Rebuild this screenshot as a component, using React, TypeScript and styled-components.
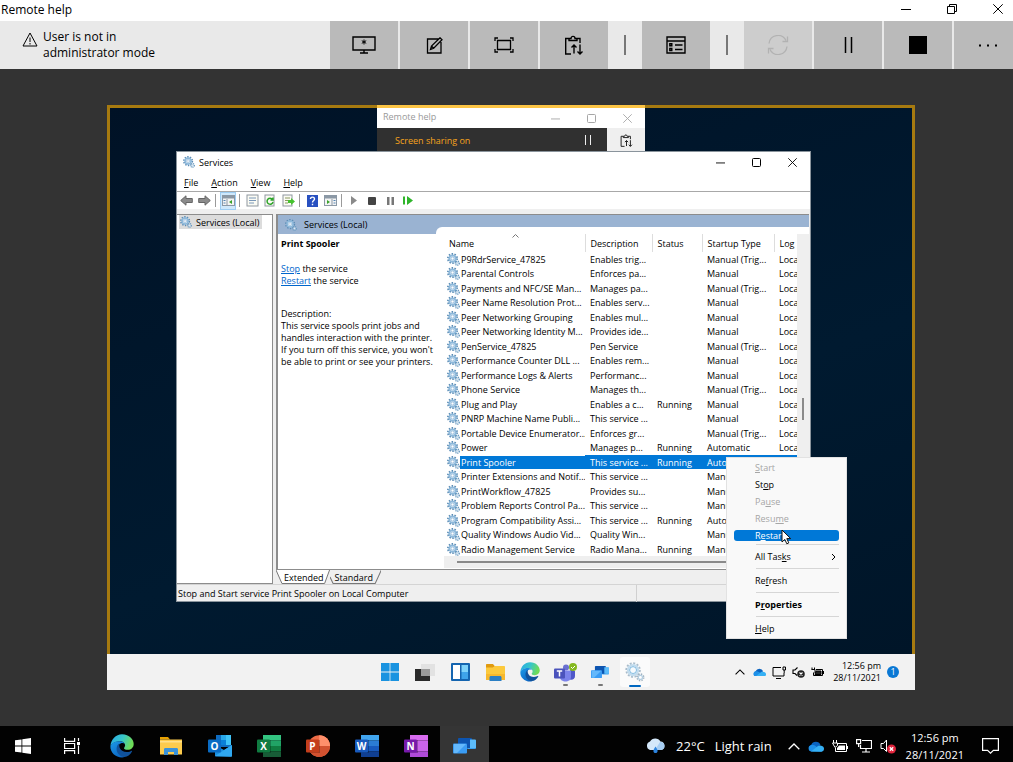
import React from "react";
import styled, { createGlobalStyle, css } from "styled-components";

const GlobalStyle = createGlobalStyle`
  *, *::before, *::after { box-sizing: border-box; }
  body { margin: 0; background: #333; font-family: "Open Sans", "Noto Sans", sans-serif; color: #000; }
  button { font: inherit; color: inherit; border: 0; padding: 0; margin: 0; background: none; }
  h1, h2, p { margin: 0; font-weight: 400; }
  svg { display: block; flex: none; }
`;

/* ---------- outer window ---------- */

const Page = styled.div`
  display: flex;
  flex-direction: column;
  min-height: 100vh;
`;

const TitleBar = styled.header`
  display: flex;
  justify-content: space-between;
  height: 21px;
  background: #fff;
`;

const Title = styled.h1`
  padding-left: 1px;
  font-size: 12px;
  line-height: 19px;
`;

const CaptionButtons = styled.div<{ $size: number; $color?: string }>`
  display: flex;
  color: ${(p) => p.$color ?? "#000"};
  button {
    display: flex;
    align-items: center;
    justify-content: center;
    width: ${(p) => p.$size}px;
  }
`;

const OuterCaptions = styled(CaptionButtons)`
  height: 17px;
  margin-right: -8px;
`;

const SessionBar = styled.div`
  display: flex;
  height: 48px;
  background: #e9e9e9;
`;

const Notice = styled.div`
  display: flex;
  flex: 1;
  gap: 5px;
  padding: 8px 0 0 22px;
  font-size: 12px;
  line-height: 16px;
  svg { margin-top: 2px; }
`;

const ToolGroup = styled.div`
  display: flex;
  gap: 2px;
`;

const ToolButton = styled.button<{ $last?: boolean }>`
  display: flex;
  align-items: center;
  justify-content: center;
  width: ${(p) => (p.$last ? 59 : 68)}px;
  padding-left: ${(p) => (p.$last ? 9 : 0)}px;
  background: #bababa;
  &:disabled { background: #cdcdcd; color: #b2b2b2; }
`;

const Divider = styled.div`
  display: flex;
  align-items: center;
  justify-content: center;
  width: 34px;
  &::before { content: ""; width: 2px; height: 20px; background: #777; }
`;

const Viewer = styled.main`
  display: flex;
  flex: 1;
  padding: 36px 98px 36px 107px;
  background: #333;
`;

/* ---------- shared remote screen ---------- */

const RemoteScreen = styled.div`
  display: flex;
  flex: 1;
  flex-direction: column;
`;

const Desktop = styled.div`
  position: relative;
  flex: 1;
  min-height: 549px;
  background: linear-gradient(160deg, #001226, #001a30 60%, #001528);
  &::after {
    content: "";
    position: absolute;
    inset: 0;
    border: 3px solid #a67a10;
    border-bottom: 0;
    pointer-events: none;
  }
`;

const Floating = styled.section<{ $x: number; $y: number; $w: number }>`
  position: absolute;
  left: ${(p) => p.$x}px;
  top: ${(p) => p.$y}px;
  width: ${(p) => p.$w}px;
`;

const HelpWindow = styled(Floating)`
  z-index: 1;
  border-top: 3px solid #fcc444;
  background: #fff;
`;

const HelpTitle = styled.div`
  display: flex;
  justify-content: space-between;
  height: 20px;
  padding-left: 6px;
  font-size: 9px;
  line-height: 18px;
  color: #999;
`;

const HelpStatus = styled.div`
  display: flex;
  height: 24px;
  background: #303030;
  color: #f7a41d;
  font-size: 9px;
  line-height: 25px;
`;

const HelpLabel = styled.span`
  flex: 1;
  padding-left: 18px;
`;

const HelpAction = styled.button<{ $light?: boolean }>`
  display: flex;
  align-items: center;
  justify-content: center;
  width: 38px;
  background: ${(p) => (p.$light ? "#efefef" : "#303030")};
  color: ${(p) => (p.$light ? "#111" : "#eee")};
`;

const ServicesWindow = styled(Floating)`
  z-index: 2;
  display: flex;
  flex-direction: column;
  border: 1px solid #8a949c;
  background: #efefef;
  font-size: 9px;
`;

const WindowTitle = styled.div`
  display: flex;
  align-items: center;
  gap: 4px;
  height: 20px;
  padding-left: 6px;
  background: #fff;
  h2 { flex: 1; font-size: 9px; }
`;

const MenuBar = styled.nav`
  display: flex;
  gap: 13px;
  height: 20px;
  padding: 1px 0 0 7px;
  background: #fff;
  border-bottom: 1px solid #a8a8a8;
`;

const IconBar = styled.div`
  display: flex;
  align-items: center;
  gap: 4px;
  height: 17px;
  padding-left: 2px;
  background: #fff;
`;

const IconButton = styled.button<{ $on?: boolean }>`
  display: flex;
  align-items: center;
  justify-content: center;
  width: 14px;
  height: 16px;
  ${(p) => p.$on && css`background: #cfe8fb; outline: 1px solid #9dcdf3;`}
`;

const BarSplit = styled.span`
  width: 1px;
  height: 13px;
  margin: 0 1px 0 0;
  background: #9a9a9a;
`;

const Console = styled.div`
  display: flex;
  gap: 3px;
  height: 370px;
  margin-top: 5px;
`;

const Tree = styled.div`
  width: 96px;
  border: 1px solid #8c8c8c;
  border-left: 0;
  background: #fff;
`;

const TreeItem = styled.button`
  display: flex;
  align-items: center;
  gap: 4px;
  height: 14px;
  margin: 0 0 0 2px;
  padding: 0 3px 0 1px;
  background: #dcdcdc;
`;

const Work = styled.div`
  display: flex;
  flex: 1;
  flex-direction: column;
  min-width: 0;
  margin-right: 1px;
`;

const Sheet = styled.div`
  flex: 1;
  border: 1px solid #8c8c8c;
  border-left-width: 2px;
  border-right: 0;
  background: #fff;
`;

const Banner = styled.div`
  display: flex;
  align-items: center;
  gap: 7px;
  height: 19px;
  padding-left: 7px;
  background: #9ab3d2;
`;

const Split = styled.div`
  display: flex;
`;

const Details = styled.div`
  width: 158px;
  padding: 4px 0 0 3px;
  line-height: 12px;
  white-space: nowrap;
  h2 { font-size: 9px; font-weight: 700; line-height: 12px; margin-bottom: 13px; }
  a { color: #0066cc; text-decoration: underline; }
  p + p { margin-top: 21px; }
`;

const ListArea = styled.div`
  display: flex;
  flex: 1;
  min-width: 0;
  height: 341px;
  margin-top: -7px;
  padding: 7px 0 0 8px;
  border-top-left-radius: 6px;
  background: #fff;
`;

const ListColumn = styled.div`
  flex: 1;
  min-width: 0;
`;

const Table = styled.table`
  width: 100%;
  table-layout: fixed;
  border-collapse: collapse;
  th, td { padding: 0 0 0 5px; text-align: left; font-weight: 400; white-space: nowrap; overflow: hidden; line-height: 13px; }
  th { height: 18px; border-right: 1px solid #ddd; position: relative; }
  th:last-child { border-right: 0; }
  th svg { position: absolute; top: 0; left: 68px; color: #777; }
  tbody tr { height: 14px; }
  tbody tr:nth-child(even) { height: 15px; }
  tbody td:first-child { padding-left: 3px; }
`;

const Row = styled.tr<{ $selected?: boolean }>`
  ${(p) => p.$selected && css`
    td:not(:first-child), td span { background: #0078d7; color: #fff; }
  `}
`;

const NameCell = styled.div`
  display: flex;
  align-items: center;
  span { flex: 1; padding-left: 1px; }
`;

const HorizontalScroll = styled.div`
  display: flex;
  align-items: center;
  height: 12px;
  padding-left: 13px;
  background: #efefef;
  &::before { content: ""; flex: 1; height: 2px; background: #8a8a8a; }
`;

const VerticalScroll = styled.div`
  width: 12px;
  padding: 164px 0 0 5px;
  background: #efefef;
  &::before { content: ""; display: block; width: 2px; height: 22px; background: #8a8a8a; }
`;

const SheetTabs = styled.div`
  display: flex;
  height: 14px;
  background: #efefef;
`;

const SheetTab = styled.button<{ $active?: boolean }>`
  position: relative;
  z-index: 0;
  height: 14px;
  padding: 0 ${(p) => (p.$active ? 6 : 8)}px 0 ${(p) => (p.$active ? 8 : 5)}px;
  line-height: 13px;
  svg { position: absolute; inset: 0; width: 100%; height: 100%; z-index: -1; }
`;

const StatusLine = styled.div`
  display: grid;
  grid-template-columns: 460px 1fr;
  height: 17px;
  border-top: 1px solid #d4d4d4;
  line-height: 17px;
  span { padding-left: 1px; border-right: 1px solid #d0d0d0; }
`;

const ContextMenu = styled(Floating)`
  z-index: 3;
  padding: 1px 7px;
  border: 1px solid #e2e2e2;
  background: #f9f9f9;
  font-size: 9px;
`;

const MenuItem = styled.button<{ $hot?: boolean; $strong?: boolean }>`
  display: flex;
  align-items: center;
  justify-content: space-between;
  width: 100%;
  height: 17px;
  padding: 0 3px 0 21px;
  font-weight: ${(p) => (p.$strong ? 700 : 400)};
  &:disabled { color: #a6a6a6; }
  ${(p) => p.$hot && css`
    height: 11px;
    margin: 3px 0;
    border-radius: 3px;
    background: #0078d7;
    color: #fff;
  `}
`;

const MenuRule = styled.hr`
  height: 1px;
  margin: 3px 0 3px 22px;
  border: 0;
  background: #d6d6d6;
`;

const Pointer = styled.div`
  position: absolute;
  z-index: 4;
  left: 674px;
  top: 424px;
`;

const InnerTaskbar = styled.div`
  display: flex;
  height: 36px;
  padding-left: 268px;
  background: #f2f2f2;
`;

const InnerApps = styled.div`
  display: flex;
  flex: 1;
  gap: 5px;
`;

const InnerApp = styled.button<{ $mark?: string }>`
  position: relative;
  display: flex;
  align-items: center;
  justify-content: center;
  width: 30px;
  height: 30px;
  margin-top: 3px;
  border-radius: 3px;
  background: ${(p) => (p.$mark === "active" ? "#fbfbfb" : "none")};
  ${(p) => p.$mark && css`
    &::after {
      content: "";
      position: absolute;
      bottom: ${p.$mark === "active" ? 0 : 1}px;
      width: ${p.$mark === "active" ? 12 : 5}px;
      height: 2px;
      border-radius: 1px;
      background: ${p.$mark === "active" ? "#0067c0" : "#777"};
    }
  `}
`;

const InnerTray = styled.div`
  display: flex;
  align-items: center;
  gap: 6px;
  padding-right: 16px;
`;

const InnerStatus = styled.div`
  display: flex;
  align-items: center;
  gap: 6px;
  margin-right: 3px;
  svg:first-child { margin-right: 2px; }
`;

const Clock = styled.time<{ $big?: boolean }>`
  font-size: ${(p) => (p.$big ? 11 : 9)}px;
  line-height: ${(p) => (p.$big ? 17 : 12)}px;
  text-align: ${(p) => (p.$big ? "center" : "right")};
  margin: 0 ${(p) => (p.$big ? 2 : 0)}px;
  white-space: nowrap;
`;

const Badge = styled.span`
  width: 12px;
  height: 12px;
  border-radius: 6px;
  background: #0a78d4;
  color: #fff;
  font-size: 9px;
  line-height: 12px;
  text-align: center;
`;

/* ---------- outer taskbar ---------- */

const Taskbar = styled.footer`
  display: flex;
  height: 36px;
  background: #020202;
  color: #fff;
  overflow: hidden;
`;

const TaskApps = styled.div`
  display: flex;
  flex: 1;
`;

const TaskApp = styled.button<{ $active?: boolean }>`
  display: flex;
  align-items: center;
  justify-content: center;
  width: 49px;
  height: 40px;
  background: ${(p) => (p.$active ? "#353535" : "none")};
  &:first-child { width: 48px; padding-right: 2px; }
  &:nth-child(2) { padding-right: 2px; }
`;

const Tray = styled.div`
  display: flex;
  align-items: center;
  gap: 8px;
  height: 40px;
  padding-right: 14px;
  font-size: 13px;
`;

const Weather = styled.button`
  display: flex;
  align-items: center;
  gap: 10px;
  margin-right: 8px;
`;

/* ---------- drawings ---------- */

type SvgProps = { w: number; h?: number; box: string; children: React.ReactNode; sw?: number; fill?: string };
const Draw = ({ w, h, box, children, sw = 1, fill = "none" }: SvgProps) => (
  <svg width={w} height={h ?? w} viewBox={box} fill={fill} stroke={fill === "none" ? "currentColor" : "none"} strokeWidth={sw} aria-hidden="true">
    {children}
  </svg>
);

const Minimise = ({ w = 10 }) => <Draw w={w} box="0 0 10 10"><path d="M0 5.5h10" /></Draw>;
const Restore = () => <Draw w={10} box="0 0 10 10"><path d="M.5 2.500h7v7h-7zM2.500 2.500v-2h7v7h-2" /></Draw>;
const Maximise = () => <Draw w={9} box="0 0 9 9"><rect x=".5" y=".5" width="8" height="8" rx="1" /></Draw>;
const Close = ({ w = 10 }) => <Draw w={w} box="0 0 10 10"><path d="M.3.3l9.400 9.400M9.700.3L.3 9.700" /></Draw>;

const Gears = ({ size = 13 }) => (
  <Draw w={size} box="0 0 26 26" fill="#fff">
    <circle cx="11" cy="11" r="9" fill="none" stroke="#5b8cb5" strokeWidth="4" strokeDasharray="2.900 2.750" />
    <circle cx="11" cy="11" r="6.500" fill="#e4f1fa" stroke="#8db8da" strokeWidth="3.500" />
    <circle cx="11" cy="11" r="3" fill="#fff" stroke="#5f93c2" />
    <circle cx="20.500" cy="20.500" r="4" fill="none" stroke="#6a9ac0" strokeWidth="3" strokeDasharray="2 1.600" />
    <circle cx="20.500" cy="20.500" r="2.500" fill="#dceaf5" stroke="#8fb4d2" />
  </Draw>
);

const PaleGears = () => (
  <Draw w={20} box="0 0 26 26" fill="#fff">
    <circle cx="10.500" cy="10.500" r="8.800" fill="none" stroke="#a9bccb" strokeWidth="2.500" strokeDasharray="2.600 2" />
    <circle cx="10.500" cy="10.500" r="6.500" fill="#fff" stroke="#c2dcee" strokeWidth="3" />
    <circle cx="10.500" cy="10.500" r="4.500" fill="#f6fafd" stroke="#5ba7d8" />
    <circle cx="20" cy="20" r="4.300" fill="none" stroke="#9fb2c0" strokeWidth="2" strokeDasharray="1.800 1.600" />
    <circle cx="20" cy="20" r="2.700" fill="#fff" stroke="#b5cfe2" strokeWidth="1.600" />
  </Draw>
);

const Clipboard = ({ size = 20 }) => (
  <Draw w={size} box="0 0 20 20" sw={1.4}>
    <path d="M7 19H1.700V3.500H5M13 3.500h3V8M5 5.500v-2h2c0-2.800 4-2.800 4 0h2v2zM10 18.500v-8M7.500 12.500L10 10l2.500 2.500M16 9.500V19M13.500 16.500L16 19l2.500-2.500" />
  </Draw>
);

const Edge = ({ size }: { size: number }) => (
  <Draw w={size} box="0 0 24 24" fill="#fff">
    <defs>
      <linearGradient id="edgeTop" x1="0" y1="0" x2="1" y2=".3">
        <stop offset="0" stopColor="#28a8e8" /><stop offset=".55" stopColor="#38c6c8" /><stop offset="1" stopColor="#6fdc58" />
      </linearGradient>
      <linearGradient id="edgeSide" x1="0" y1="0" x2=".6" y2="1">
        <stop offset="0" stopColor="#1c9ae8" /><stop offset="1" stopColor="#0c67c4" />
      </linearGradient>
    </defs>
    <path fill="url(#edgeTop)" d="M.5 12C.8 5.500 5.800.3 12 .3c7.500 0 11.700 5.200 11.700 9.700 0 3.500-2.600 5.800-6 5.800-2.700 0-3.700-.8-3.700-1.600 0-.7 1.100-1.200 1.100-2.900C15.100 9 13 7.200 10 7.200 5.500 7.200 1.300 9.500.5 12z" />
    <path fill="url(#edgeSide)" d="M.4 12.300C1 9 5.500 7 10 7.200c2.300.1 4 1 4.700 2.300C13 8.500 10.500 8.800 9 10.500c-2.500 3-1.500 9.500 6 12.300-1 .5-2 .7-3 .7C5.500 23.500.1 18.500.4 12.300z" />
    <path fill="#10529c" d="M6.600 15c0-2.600 1-4.500 2.900-5.700-1 3.200.6 8.700 7.200 8.700 2.300 0 3.800-.7 4.600-1.100.5-.3 1 .1.700.6-1.700 3.200-4.800 5.500-7.500 5.400C9.800 22.700 6.600 19 6.600 15z" />
  </Draw>
);

const Folder = ({ w }: { w: number }) => (
  <Draw w={w} h={(w * 18) / 22} box="0 0 22 18" fill="#fff">
    <path fill="#e8a100" d="M0 0h8l2 2.500H0z" />
    <path fill="#fccb4d" d="M0 2.500h22V17.500H0z" />
    <path fill="#ffe08a" d="M0 4h22v1.500H0z" />
    <path fill="#3a92d8" d="M4 18v-5.500c0-1 .6-1.500 1.500-1.500h11c.9 0 1.500.5 1.500 1.500V18h-4v-3H8v3z" />
  </Draw>
);

const FolderFlat = () => (
  <Draw w={19} h={17} box="0 0 19 17" fill="#fff">
    <path fill="#e09a10" d="M0 1c0-.6.4-1 1-1h6l2 2.500L7 4H0z" />
    <path fill="#fcc93c" d="M0 3.500h7l2-1.500h9c.6 0 1 .4 1 1v13H0z" />
    <path fill="#f7b82c" d="M0 10h19v6H0z" />
    <path fill="#2b7fc4" d="M3.500 17v-3.500c0-1 .6-1.500 1.500-1.500h9c.9 0 1.500.5 1.500 1.500V17z" />
  </Draw>
);

const Cloud = ({ w = 15 }) => (
  <Draw w={w} h={(w * 11) / 16} box="0 0 16 11" fill="#fff">
    <path fill="#0a63c0" d="M3.500 10.500a3.400 3.400 0 0 1-.3-6.500 5 5 0 0 1 9.300 0z" />
    <path fill="#1e90e8" d="M3.200 4c2-.5 3.500.5 5 1.500l6 5H3.500A3.300 3.300 0 0 1 3.200 4z" />
    <path fill="#35b0f4" d="M3 10.600l7-5.600c1-1 5.800-.8 6 2.500.1 2-1.300 3.200-3 3.200z" />
  </Draw>
);

const RemoteApp = ({ w }: { w: number }) => (
  <Draw w={w} h={(w * 16) / 23} box="0 0 23 16" fill="#fff">
    <rect x="14" y="2" width="9" height="9" rx="1" fill="#3aa0f0" />
    <rect x="5" y="0" width="14" height="10" rx="1" fill="#0c54b0" />
    <path d="M17 1.500h5a1 1 0 0 1 1 1V10h-6z" fill="#5cbcfa" />
    <rect x="0" y="5.500" width="14" height="10" rx="1" fill="#3a9cf4" />
    <path d="M1 6l12 0-9 9H1z" fill="#64b8fb" />
  </Draw>
);

type OfficeProps = { letter: string; dark: string; bands: string[]; round?: boolean };
const Office = ({ letter, dark, bands, round }: OfficeProps) => (
  <svg width="24" height="22" viewBox="0 0 24 22" aria-hidden="true">
    {round ? (
      <>
        <circle cx="13.200" cy="11" r="10.800" fill={bands[0]} />
        <path d="M13.200.2A10.800 10.800 0 0 1 24 11H13.200z" fill={bands[1]} />
        <path d="M2.400 11H24a10.800 10.800 0 0 1-21.600 0z" fill={bands[2]} />
      </>
    ) : (
      bands.map((c, i) => <rect key={i} x="6" y={i * 5.5} width="18" height="5.500" fill={c} />)
    )}
    <rect x="5" y="5" width="9" height="13" fill="#000" opacity=".25" />
    <rect x="0" y="4.500" width="13" height="13" rx="1" fill={dark} />
    <text x="6.500" y="14.600" textAnchor="middle" fontFamily="Open Sans, sans-serif" fontWeight="700" fontSize="10" fill="#fff">{letter}</text>
  </svg>
);

const Chevron = ({ w = 12 }) => <Draw w={w} h={w / 2 + 1} box="0 0 12 7" sw={1.3}><path d="M.7 6.300L6 1l5.300 5.300" /></Draw>;

const ConsolePane = ({ flip = false }) => (
  <Draw w={13} h={11} box="0 0 13 11" fill="#fff">
    <rect x=".5" y=".5" width="12" height="10" fill="#f4f4f4" stroke="#8b98a5" />
    <path d="M1 1h11v2.500H1z" fill="#8b98a5" />
    <path d={flip ? "M8 4v6" : "M5 4v6"} stroke="#8b98a5" />
    <path d={flip ? "M3 5l3 2-3 2z" : "M10 5L7 7l3 2z"} fill="#3aa32b" />
    <path d={flip ? "M9.500 5.500h2M9.500 8h2" : "M1.500 5.500h2M1.500 8h2"} stroke="#5585b5" />
  </Draw>
);

const Sheetlet = ({ kind }: { kind: "list" | "refresh" | "export" }) => (
  <Draw w={13} h={13} box="0 0 13 13" fill="#fff">
    <rect x="1" y="1" width={kind === "list" ? 11 : 9} height="11" fill="#fbfbf4" stroke="#8f98a0" />
    {kind === "list" && <path d="M3 4h7M3 6.500h7M3 9h5" stroke="#7b98b8" />}
    {kind === "refresh" && <path d="M8.500 5.500A3 3 0 1 0 9 8M9 3.500v2.500H6.500" fill="none" stroke="#2fa52b" strokeWidth="1.500" />}
    {kind === "export" && <><path d="M3 4h5M3 6.500h3M3 9h3" stroke="#8a9a60" /><path d="M6 6h3V4l4 3.500L9 11V9H6z" fill="#46c22f" /></>}
  </Draw>
);

const Arrow = ({ back = false }) => (
  <Draw w={13} h={11} box="0 0 13 11" fill="#fff">
    <path d={back ? "M.7 5.500L6 .8V3.500h6.300v4H6v2.700z" : "M12.300 5.500L7 .8V3.500H.7v4H7v2.700z"} fill="#8b8b8b" stroke="#666" />
  </Draw>
);

/* ---------- data ---------- */

const services: [string, string, string, string][] = [
  ["P9RdrService_47825", "Enables trig...", "", "Manual (Trig..."],
  ["Parental Controls", "Enforces pa...", "", "Manual"],
  ["Payments and NFC/SE Man...", "Manages pa...", "", "Manual (Trig..."],
  ["Peer Name Resolution Prot...", "Enables serv...", "", "Manual"],
  ["Peer Networking Grouping", "Enables mul...", "", "Manual"],
  ["Peer Networking Identity M...", "Provides ide...", "", "Manual"],
  ["PenService_47825", "Pen Service", "", "Manual (Trig..."],
  ["Performance Counter DLL ...", "Enables rem...", "", "Manual"],
  ["Performance Logs & Alerts", "Performanc...", "", "Manual"],
  ["Phone Service", "Manages th...", "", "Manual (Trig..."],
  ["Plug and Play", "Enables a c...", "Running", "Manual"],
  ["PNRP Machine Name Publi...", "This service ...", "", "Manual"],
  ["Portable Device Enumerator...", "Enforces gr...", "", "Manual (Trig..."],
  ["Power", "Manages p...", "Running", "Automatic"],
  ["Print Spooler", "This service ...", "Running", "Automatic"],
  ["Printer Extensions and Notif...", "This service ...", "", "Manual"],
  ["PrintWorkflow_47825", "Provides su...", "", "Manual"],
  ["Problem Reports Control Pa...", "This service ...", "", "Manual"],
  ["Program Compatibility Assi...", "This service ...", "Running", "Automatic"],
  ["Quality Windows Audio Vid...", "Quality Win...", "", "Manual"],
  ["Radio Management Service", "Radio Mana...", "Running", "Manual"],
];

/* ---------- views ---------- */

const SessionToolbar = () => (
  <SessionBar>
    <Notice>
      <Draw w={16} h={16} box="0 0 16 16"><path d="M8 2L15 15H1zM8 6.500v4.500M8 12v1.500" /></Draw>
      <p>User is not in<br />administrator mode</p>
    </Notice>
    <ToolGroup>
      <ToolButton aria-label="Select monitor">
        <Draw w={24} h={18} box="0 0 24 18" sw={1.4}><path d="M1 1h22v13H1zM12 14v3M8 17h8" /><path strokeWidth="1" d="M12 3.500v5M9.800 4.700l4.400 2.600M14.200 4.700L9.800 7.300" /></Draw>
      </ToolButton>
      <ToolButton aria-label="Annotate">
        <Draw w={17} h={17} box="0 0 17 17" sw={1.3}><path d="M13 2H1.500v14H15V5M4.500 12.500l1-3.500L14 .8l2 2-8.300 8.500zM5.500 9l2.200 2.300" /></Draw>
      </ToolButton>
      <ToolButton aria-label="Actual size">
        <Draw w={20} h={16} box="0 0 20 16" sw={1.3}><path d="M1 4V1h3M16 1h3v3M19 12v3h-3M4 15H1v-3M3.500 3.500h13v9h-13z" /></Draw>
      </ToolButton>
      <ToolButton aria-label="Instruction channel"><Clipboard /></ToolButton>
    </ToolGroup>
    <Divider />
    <ToolButton aria-label="Task manager">
      <Draw w={20} h={18} box="0 0 20 18" sw={1.4}><path d="M1 1h18v16H1zM1 5h18M3.800 7.800h2v2h-2zM3.800 12.500h2v2h-2zM9 9h7.500M9 13.500h7.500" /></Draw>
    </ToolButton>
    <Divider />
    <ToolGroup>
      <ToolButton aria-label="Reconnect" disabled>
        <Draw w={22} h={20} box="0 0 22 20" sw={1.3}><path d="M2 8.500A9 9 0 0 1 19 5.500M20.500 1.500v5h-5M20 11.500A9 9 0 0 1 3 14.500M1.500 18.500v-5h5" /></Draw>
      </ToolButton>
      <ToolButton aria-label="Pause"><Draw w={9} h={16} box="0 0 9 16"><path d="M1.500 0v16M7.500 0v16" strokeWidth="1.500" /></Draw></ToolButton>
      <ToolButton aria-label="End"><Draw w={18} h={18} box="0 0 18 18" fill="#000"><path d="M0 0h18v18H0z" /></Draw></ToolButton>
      <ToolButton aria-label="More" $last>
        <Draw w={18} h={3} box="0 0 18 3" fill="#000"><path d="M0 .5h2v2H0zM8 .5h2v2H8zM16 .5h2v2h-2z" /></Draw>
      </ToolButton>
    </ToolGroup>
  </SessionBar>
);

const ServiceTable = () => (
  <Table>
    <colgroup>
      <col style={{ width: 141 }} /><col style={{ width: 67 }} /><col style={{ width: 50 }} /><col style={{ width: 72 }} /><col />
    </colgroup>
    <thead>
      <tr>
        <th>Name<Draw w={7} h={4} box="0 0 7 4"><path d="M.5 3.500l3-3 3 3" /></Draw></th>
        <th>Description</th><th>Status</th><th>Startup Type</th><th>Log</th>
      </tr>
    </thead>
    <tbody>
      {services.map(([name, description, status, startup]) => (
        <Row key={name} $selected={name === "Print Spooler"}>
          <td><NameCell><Gears /><span>{name}</span></NameCell></td>
          <td>{description}</td><td>{status}</td><td>{startup}</td><td>Local</td>
        </Row>
      ))}
    </tbody>
  </Table>
);

const Services = () => (
  <ServicesWindow $x={69} $y={46} $w={635}>
    <WindowTitle>
      <Gears size={12} />
      <h2>Services</h2>
      <CaptionButtons $size={36}>
        <button aria-label="Minimise"><Minimise w={9} /></button>
        <button aria-label="Maximise"><Maximise /></button>
        <button aria-label="Close"><Close w={9} /></button>
      </CaptionButtons>
    </WindowTitle>
    <MenuBar>
      <button><u>F</u>ile</button><button><u>A</u>ction</button><button><u>V</u>iew</button><button><u>H</u>elp</button>
    </MenuBar>
    <IconBar>
      <IconButton aria-label="Back"><Arrow back /></IconButton>
      <IconButton aria-label="Forward"><Arrow /></IconButton>
      <BarSplit />
      <IconButton aria-label="Show tree" $on><ConsolePane /></IconButton>
      <BarSplit />
      <IconButton aria-label="Properties"><Sheetlet kind="list" /></IconButton>
      <IconButton aria-label="Refresh"><Sheetlet kind="refresh" /></IconButton>
      <IconButton aria-label="Export"><Sheetlet kind="export" /></IconButton>
      <BarSplit />
      <IconButton aria-label="Help">
        <Draw w={11} h={12} box="0 0 11 12" fill="#fff"><path d="M0 0h11v12H0z" fill="#2850c0" /><path d="M3.500 4c0-2.500 4-2.500 4 0 0 1.500-2 1.500-2 3.500M5.500 8.700v1.500" fill="none" stroke="#fff" strokeWidth="1.400" /></Draw>
      </IconButton>
      <IconButton aria-label="Action pane"><ConsolePane flip /></IconButton>
      <BarSplit />
      <IconButton aria-label="Start"><Draw w={6} h={9} box="0 0 6 9" fill="#8a8a8a"><path d="M0 0l6 4.500L0 9z" /></Draw></IconButton>
      <IconButton aria-label="Stop"><Draw w={8} h={8} box="0 0 8 8" fill="#444"><rect width="8" height="8" rx="1" /></Draw></IconButton>
      <IconButton aria-label="Pause"><Draw w={7} h={8} box="0 0 7 8" fill="#777"><path d="M0 0h2.500v8H0zM4.500 0H7v8H4.500z" /></Draw></IconButton>
      <IconButton aria-label="Restart"><Draw w={10} h={9} box="0 0 10 9" fill="#2fb52b"><path d="M0 .5h2v8H0zM4 0l6 4.500L4 9z" /></Draw></IconButton>
    </IconBar>
    <Console>
      <Tree><TreeItem><Gears size={12} />Services (Local)</TreeItem></Tree>
      <Work>
        <Sheet>
          <Banner><Gears size={12} />Services (Local)</Banner>
          <Split>
            <Details>
              <h2>Print Spooler</h2>
              <p><a href="#stop">Stop</a> the service<br /><a href="#restart">Restart</a> the service</p>
              <p>Description:<br />This service spools print jobs and<br />handles interaction with the printer.<br />If you turn off this service, you won't<br />be able to print or see your printers.</p>
            </Details>
            <ListArea>
              <ListColumn><ServiceTable /><HorizontalScroll /></ListColumn>
              <VerticalScroll />
            </ListArea>
          </Split>
        </Sheet>
        <SheetTabs>
          <SheetTab $active>
            <svg viewBox="0 0 54 14" preserveAspectRatio="none"><path d="M0 0l6 13.500h43L54 0" fill="#fff" stroke="#777" /></svg>
            Extended
          </SheetTab>
          <SheetTab>
            <svg viewBox="0 0 50 14" preserveAspectRatio="none"><path d="M0 7l3 6.500h41L50 0" fill="none" stroke="#777" /></svg>
            Standard
          </SheetTab>
        </SheetTabs>
      </Work>
    </Console>
    <StatusLine><span>Stop and Start service Print Spooler on Local Computer</span></StatusLine>
  </ServicesWindow>
);

const ServiceMenu = () => (
  <ContextMenu $x={619} $y={352} $w={121}>
    <MenuItem disabled><span><u>S</u>tart</span></MenuItem>
    <MenuItem><span>St<u>o</u>p</span></MenuItem>
    <MenuItem disabled><span>Pa<u>u</u>se</span></MenuItem>
    <MenuItem disabled><span>Resu<u>m</u>e</span></MenuItem>
    <MenuItem $hot><span>R<u>e</u>start</span></MenuItem>
    <MenuRule />
    <MenuItem><span>All Tas<u>k</u>s</span><Draw w={5} h={8} box="0 0 5 8"><path d="M1 1l3 3-3 3" /></Draw></MenuItem>
    <MenuRule />
    <MenuItem><span>Re<u>f</u>resh</span></MenuItem>
    <MenuRule />
    <MenuItem $strong><span>P<u>r</u>operties</span></MenuItem>
    <MenuRule />
    <MenuItem><span><u>H</u>elp</span></MenuItem>
  </ContextMenu>
);

const RemoteTaskbar = () => (
  <InnerTaskbar>
    <InnerApps>
      <InnerApp aria-label="Start"><Draw w={18} box="0 0 18 18" fill="#1a93e0"><path d="M0 0h8.600v8.600H0zM9.400 0H18v8.600H9.400zM0 9.400h8.600V18H0zM9.400 9.400H18V18H9.400z" /></Draw></InnerApp>
      <InnerApp aria-label="Task view">
        <Draw w={20} h={17} box="0 0 20 17" fill="#fff"><path d="M6 0h14v12H6z" fill="#e2e2e2" /><path d="M0 5h15v12H0z" fill="#2a2a2a" /><path d="M6 5h9v7H6z" fill="#9a9a9a" /></Draw>
      </InnerApp>
      <InnerApp aria-label="Widgets">
        <Draw w={19} h={18} box="0 0 19 18" fill="#fff"><rect width="19" height="18" rx="1" fill="#1565b0" /><path d="M2 2h7v14H2z" fill="#fff" /><path d="M10.500 2H17v7h-6.500z" fill="#7fd3fa" /><path d="M10.500 9H17v7h-6.500z" fill="#3fa4ea" /></Draw>
      </InnerApp>
      <InnerApp aria-label="File Explorer"><FolderFlat /></InnerApp>
      <InnerApp aria-label="Edge"><Edge size={20} /></InnerApp>
      <InnerApp aria-label="Teams" $mark="open">
        <Draw w={23} h={19} box="0 0 23 19" fill="#fff">
          <circle cx="12" cy="4.500" r="3" fill="#6a70d0" /><circle cx="18" cy="7" r="2" fill="#5059c9" />
          <path d="M14 8h7v5c0 2.500-2.500 4.500-5 3.500z" fill="#5059c9" /><path d="M6 7.500h11V14c0 6-11 6-11 0z" fill="#7b83eb" />
          <rect x="0" y="5.500" width="11" height="10" rx="1" fill="#4b53bc" /><path d="M2.800 8h5.400M5.500 8v5.500" stroke="#fff" strokeWidth="1.500" />
          <circle cx="19" cy="4" r="4" fill="#84b81f" /><path d="M17 4l1.500 1.500L21 3" stroke="#fff" fill="none" />
        </Draw>
      </InnerApp>
      <InnerApp aria-label="Remote help" $mark="open"><RemoteApp w={18} /></InnerApp>
      <InnerApp aria-label="Services" $mark="active"><PaleGears /></InnerApp>
    </InnerApps>
    <InnerTray>
      <InnerStatus>
        <Chevron w={10} />
        <Cloud w={13} />
        <Draw w={14} h={13} box="0 0 14 13"><path d="M9 1.500H1v8.500h11V7M4 12.500h5M11 1h2.500v3H11zM12.200 4v3" /></Draw>
        <Draw w={13} h={12} box="0 0 13 12" sw={1.1}><path d="M5.500 1.500L3 4H1v3.500h2L5 9.500" /><circle cx="9" cy="8" r="3.800" fill="#222" stroke="none" /><path d="M7.500 6.500l3 3M10.500 6.500l-3 3" stroke="#fff" /></Draw>
        <Draw w={13} h={10} box="0 0 13 10"><path d="M5 2.500h6.500v6H2.500V6M12.500 4v3M1 .5v2M3.500.5v2M.5 2.500H4v2L2.500 6" /><path d="M5 4h5v3.500H4z" fill="#222" /></Draw>
      </InnerStatus>
      <Clock>12:56 pm<br />28/11/2021</Clock>
      <Badge>1</Badge>
    </InnerTray>
  </InnerTaskbar>
);

const HostTaskbar = () => (
  <Taskbar>
    <TaskApps>
      <TaskApp aria-label="Start"><Draw w={16} box="0 0 16 16" fill="#fff"><path d="M0 2.300L6.500 1.400v6.200H0zM7.300 1.300L16 0v7.600H7.300zM0 8.400h6.500v6.200L0 13.700zM7.300 8.400H16V16l-8.700-1.300z" /></Draw></TaskApp>
      <TaskApp aria-label="Task view">
        <Draw w={16} box="0 0 16 16" sw={1.2}><path d="M.6 0v3.400h10V0M.6 16v-3.400h10V16M.6 5.500h10v5H.6zM14.500 0v3M14.500 7.500v8.500" /><path d="M13 4h3v3h-3z" fill="#fff" stroke="none" /></Draw>
      </TaskApp>
      <TaskApp aria-label="Edge"><Edge size={24} /></TaskApp>
      <TaskApp aria-label="File Explorer"><Folder w={22} /></TaskApp>
      <TaskApp aria-label="Outlook">
        <svg width="24" height="22" viewBox="0 0 24 22" aria-hidden="true">
          <path d="M8 0h15v12H8z" fill="#0f6cc0" /><path d="M13 0h5v5h-5z" fill="#28a8ea" /><path d="M18 0h5v5h-5zM18 5h5v5h-5z" fill="#40c4f8" /><path d="M13 5h5v5h-5z" fill="#0a80d8" />
          <path d="M7 10l9 5 8-5v10.500c0 .6-.4 1-1 1H8c-.6 0-1-.4-1-1z" fill="#1a8fe0" /><path d="M7 21l17-11v11c0 .4-.4.700-1 .7z" fill="#30a8f0" />
          <rect x="0" y="4.500" width="13" height="13" rx="1" fill="#0a6cc4" />
          <text x="6.500" y="14.600" textAnchor="middle" fontFamily="Open Sans, sans-serif" fontWeight="700" fontSize="10" fill="#fff">O</text>
        </svg>
      </TaskApp>
      <TaskApp aria-label="Excel"><Office letter="X" dark="#107c41" bands={["#33c481", "#21a366", "#107c41", "#185c37"]} /></TaskApp>
      <TaskApp aria-label="PowerPoint"><Office round letter="P" dark="#c43e1c" bands={["#ed6c47", "#ff8f6b", "#d35230"]} /></TaskApp>
      <TaskApp aria-label="Word"><Office letter="W" dark="#185abd" bands={["#41a5ee", "#2b7cd3", "#185abd", "#103f91"]} /></TaskApp>
      <TaskApp aria-label="OneNote"><Office letter="N" dark="#7719aa" bands={["#d86cf0", "#ca64ea", "#ca64ea", "#b04bd8"]} /></TaskApp>
      <TaskApp aria-label="Remote help" $active><RemoteApp w={23} /></TaskApp>
    </TaskApps>
    <Tray>
      <Weather>
        <Draw w={21} h={16} box="0 0 21 16" fill="#fff"><path d="M5 12A4.500 4.500 0 0 1 5 3.500a6 6 0 0 1 10.500 0A4.300 4.300 0 0 1 16 12z" fill="#d4e8fa" /><path d="M15 4a4 4 0 0 1 1 8h-6z" fill="#a6cdf2" /><path d="M10.500 8.500c3 4 2.500 6.500 0 6.500s-3-2.500 0-6.500z" fill="#2c84e0" /></Draw>
        <span>22°C</span><span>Light rain</span>
      </Weather>
      <Chevron />
      <Cloud w={16} />
      <Draw w={16} h={13} box="0 0 16 13"><path d="M6 3.500h8.500v8h-11V8M15.500 6v3M1.500 0v3M4.500 0v3M.5 3h5v2.500L3 7.500z" /><path d="M7 5.500h6V10H5V8z" fill="#fff" stroke="none" /></Draw>
      <Draw w={16} h={14} box="0 0 16 14" sw={1.2}><path d="M6 1.500h9.500v8h-11V6M10 9.500V13M6 13h8M.6.6h4v4h-4zM2.600 4.600V8" /></Draw>
      <Draw w={16} h={15} box="0 0 16 15"><path d="M6.500 1L3.500 4.500H1v5h2.500l3 3z" /><circle cx="11.500" cy="10" r="4.500" fill="#e0243c" stroke="none" /><path d="M9.800 8.300l3.400 3.400M13.200 8.300l-3.400 3.400" strokeWidth="1.300" /></Draw>
      <Clock $big>12:56 pm<br />28/11/2021</Clock>
      <span />
      <Draw w={17} h={16} box="0 0 17 16" sw={1.2}><path d="M.6.6h15.800v11.800h-5L8.500 15.200 5.600 12.400h-5z" /></Draw>
    </Tray>
  </Taskbar>
);

export default function App() {
  return (
    <Page>
      <GlobalStyle />
      <TitleBar>
        <Title>Remote help</Title>
        <OuterCaptions $size={46}>
          <button aria-label="Minimise"><Minimise /></button>
          <button aria-label="Restore"><Restore /></button>
          <button aria-label="Close"><Close /></button>
        </OuterCaptions>
      </TitleBar>
      <SessionToolbar />
      <Viewer>
        <RemoteScreen>
          <Desktop>
            <HelpWindow $x={270} $y={0} $w={268}>
              <HelpTitle>
                <span>Remote help</span>
                <CaptionButtons $size={36} $color="#a6a6a6">
                  <button aria-label="Minimise"><Minimise w={9} /></button>
                  <button aria-label="Maximise" disabled><Maximise /></button>
                  <button aria-label="Close"><Close w={9} /></button>
                </CaptionButtons>
              </HelpTitle>
              <HelpStatus>
                <HelpLabel>Screen sharing on</HelpLabel>
                <HelpAction aria-label="Pause sharing"><Draw w={6} h={10} box="0 0 6 10"><path d="M.5 0v10M5.500 0v10" /></Draw></HelpAction>
                <HelpAction aria-label="Instruction channel" $light><Clipboard size={13} /></HelpAction>
              </HelpStatus>
            </HelpWindow>
            <Services />
            <ServiceMenu />
            <Pointer>
              <Draw w={11} h={16} box="0 0 11 16" fill="#fff"><path d="M1 1v12l2.800-2.600 2 4.400 2-.9-2-4.300h3.900z" fill="#fff" stroke="#111" /></Draw>
            </Pointer>
          </Desktop>
          <RemoteTaskbar />
        </RemoteScreen>
      </Viewer>
      <HostTaskbar />
    </Page>
  );
}
